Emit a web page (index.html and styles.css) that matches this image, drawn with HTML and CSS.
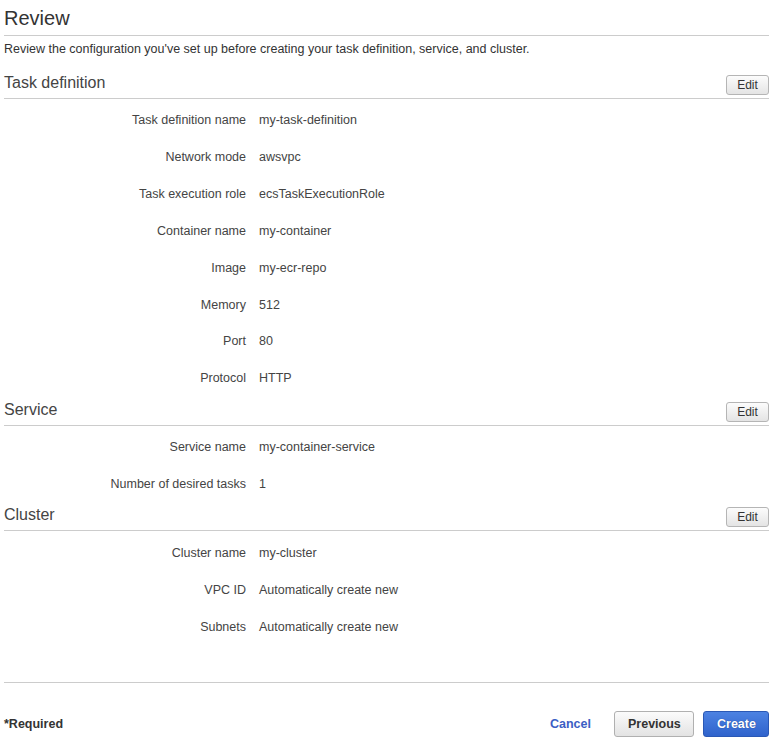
FILE: index.html
```html
<!DOCTYPE html>
<html>
<head>
<meta charset="utf-8">
<link rel="stylesheet" href="styles.css">
</head>
<body>
<div class="page">
  <h1 class="title">Review</h1>
  <p class="desc">Review the configuration you've set up before creating your task definition, service, and cluster.</p>

  <section class="section">
    <div class="section-head">
      <h2>Task definition</h2>
      <button class="btn-edit">Edit</button>
    </div>
    <dl class="rows">
      <dt>Task definition name</dt><dd>my-task-definition</dd>
      <dt>Network mode</dt><dd>awsvpc</dd>
      <dt>Task execution role</dt><dd>ecsTaskExecutionRole</dd>
      <dt>Container name</dt><dd>my-container</dd>
      <dt>Image</dt><dd>my-ecr-repo</dd>
      <dt>Memory</dt><dd>512</dd>
      <dt>Port</dt><dd>80</dd>
      <dt>Protocol</dt><dd>HTTP</dd>
    </dl>
  </section>

  <section class="section">
    <div class="section-head">
      <h2>Service</h2>
      <button class="btn-edit">Edit</button>
    </div>
    <dl class="rows">
      <dt>Service name</dt><dd>my-container-service</dd>
      <dt>Number of desired tasks</dt><dd>1</dd>
    </dl>
  </section>

  <section class="section">
    <div class="section-head">
      <h2>Cluster</h2>
      <button class="btn-edit">Edit</button>
    </div>
    <dl class="rows">
      <dt>Cluster name</dt><dd>my-cluster</dd>
      <dt>VPC ID</dt><dd>Automatically create new</dd>
      <dt>Subnets</dt><dd>Automatically create new</dd>
    </dl>
  </section>

  <footer class="footer">
    <span class="required">*Required</span>
    <div class="actions">
      <a class="cancel" href="#">Cancel</a>
      <button class="btn btn-secondary">Previous</button>
      <button class="btn btn-primary">Create</button>
    </div>
  </footer>
</div>
</body>
</html>
```

FILE: styles.css
```css
html, body {
  margin: 0;
  padding: 0;
  background: #fff;
}

body {
  font-family: "Liberation Sans", Arial, sans-serif;
  font-size: 12.5px;
  color: #444;
}

.page {
  width: 765px;
  margin-left: 4px;
}

.title {
  margin: 0;
  padding: 6px 0 5px;
  font-size: 20px;
  line-height: 24px;
  font-weight: normal;
  color: #333;
  border-bottom: 1px solid #ccc;
}

.desc {
  margin: 5px 0 12px;
  line-height: 17px;
  color: #333;
}

.section-head {
  display: flex;
  justify-content: space-between;
  align-items: flex-end;
  height: 29px;
  box-sizing: border-box;
  padding-bottom: 3px;
  border-bottom: 1px solid #ccc;
}

.section-head h2 {
  margin: 0 0 2px;
  font-size: 16px;
  line-height: 20px;
  font-weight: normal;
  color: #444;
}

.btn-edit {
  height: 20px;
  width: 43px;
  padding: 0;
  font-family: inherit;
  font-size: 12px;
  color: #333;
  background: linear-gradient(#fcfcfc, #e4e4e4);
  border: 1px solid #b5b5b5;
  border-radius: 3px;
  cursor: pointer;
}

.rows {
  display: grid;
  grid-template-columns: 242px 1fr;
  column-gap: 13px;
  grid-auto-rows: 36.85px;
  align-items: center;
  margin: 3px 0 0;
}

.rows dt {
  text-align: right;
  color: #444;
}

.rows dd {
  margin: 0;
  color: #444;
}

.footer {
  display: flex;
  justify-content: space-between;
  align-items: center;
  margin-top: 37px;
  padding-top: 28px;
  border-top: 1px solid #ccc;
}

.required {
  font-weight: bold;
  color: #333;
}

.actions {
  display: flex;
  align-items: center;
}

.cancel {
  font-weight: bold;
  color: #3c5ec4;
  text-decoration: none;
  margin-right: 23px;
}

.btn {
  height: 26px;
  box-sizing: border-box;
  padding: 0 13px;
  font-family: inherit;
  font-size: 12.5px;
  font-weight: bold;
  border-radius: 3px;
  cursor: pointer;
}

.btn-secondary {
  width: 80px;
  color: #333;
  background: linear-gradient(#fbfbfb, #e3e3e3);
  border: 1px solid #b0b0b0;
  margin-right: 9px;
}

.btn-primary {
  width: 66px;
  color: #fff;
  background: linear-gradient(#4c82e2, #2f63cc);
  border: 1px solid #2a58b5;
  text-shadow: 0 0 1px #1d3f8a;
}
```
